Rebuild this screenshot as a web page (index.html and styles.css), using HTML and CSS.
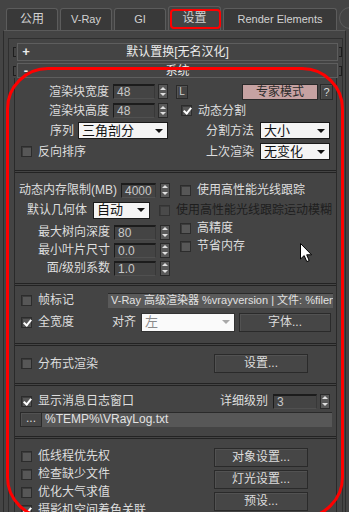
FILE: index.html
```html
<!DOCTYPE html>
<html lang="zh-CN">
<head>
    <meta charset="UTF-8">
    <meta name="viewport" content="width=device-width, initial-scale=1.0">
    <title>V-Ray 设置</title>
    <link rel="stylesheet" href="styles.css">
</head>
<body>
    <div class="tabs">
        <div class="tab">公用</div>
        <div class="tab en">V-Ray</div>
        <div class="tab en">GI</div>
        <div class="tab active">设置</div>
        <div class="tab en wide">Render Elements</div>
        <span class="tab-ring"></span>
    </div>

    <div class="panel">
        <div class="rollouts">
            <div class="roll-head">
                <span class="brk"></span>
                <div class="bar"><span class="sign">+</span><span>默认置换[无名汉化]</span><span></span></div>
                <span class="brk right"></span>
            </div>
            <div class="roll-head open">
                <span class="brk"></span>
                <div class="bar"><span class="sign">-</span><span>系统</span><span></span></div>
                <span class="brk right"></span>
            </div>

            <div class="roll-body">
                <!-- render regions -->
                <div class="sec sec-split">
                    <div class="cell-l">
                        <span>渲染块宽度</span>
                        <span class="inp w42">48</span>
                        <span class="spin"></span>
                    </div>
                    <div class="cell-r top">
                        <span class="lbtn">L</span>
                        <span class="btn expert">专家模式</span>
                        <span class="btn qbtn">?</span>
                    </div>
                    <div class="cell-l">
                        <span>渲染块高度</span>
                        <span class="inp w42">48</span>
                        <span class="spin"></span>
                    </div>
                    <div class="cell-r">
                        <label class="chk in11"><span class="cb on"></span>动态分割</label>
                    </div>
                    <div class="cell-l">
                        <span>序列</span>
                        <span class="dd w90">三角剖分</span>
                    </div>
                    <div class="cell-r end">
                        <span>分割方法</span>
                        <span class="dd w70">大小</span>
                    </div>
                    <div class="cell-l start">
                        <label class="chk"><span class="cb"></span>反向排序</label>
                    </div>
                    <div class="cell-r end">
                        <span>上次渲染</span>
                        <span class="dd w70">无变化</span>
                    </div>
                </div>

                <!-- raycaster -->
                <div class="sec sec-ray">
                    <div class="col-l">
                        <div class="row">
                            <span>动态内存限制(MB)</span>
                            <span class="inp w35">4000</span>
                            <span class="spin"></span>
                        </div>
                        <div class="row tall">
                            <span>默认几何体</span>
                            <span class="dd w57">自动</span>
                            <span class="cb dim"></span>
                        </div>
                        <div class="row">
                            <span>最大树向深度</span>
                            <span class="inp w42">80</span>
                            <span class="spin"></span>
                        </div>
                        <div class="row">
                            <span>最小叶片尺寸</span>
                            <span class="inp w42">0.0</span>
                            <span class="spin"></span>
                        </div>
                        <div class="row">
                            <span>面/级别系数</span>
                            <span class="inp w42">1.0</span>
                            <span class="spin"></span>
                        </div>
                    </div>
                    <div class="col-r">
                        <label class="chk in4"><span class="cb"></span>使用高性能光线跟踪</label>
                        <div class="off-text">使用高性能光线跟踪运动模糊</div>
                        <label class="chk in4"><span class="cb"></span>高精度</label>
                        <label class="chk in4"><span class="cb"></span>节省内存</label>
                    </div>
                </div>

                <!-- frame stamp -->
                <div class="sec sec-stamp">
                    <label class="chk"><span class="cb"></span>帧标记</label>
                    <div class="fld stamp">V-Ray 高级渲染器 %vrayversion | 文件: %filename | 帧: %frame</div>
                    <label class="chk"><span class="cb on"></span>全宽度</label>
                    <div class="stamp-opts">
                        <span>对齐</span>
                        <span class="dd off w94">左</span>
                        <span class="btn w92">字体...</span>
                    </div>
                </div>

                <!-- distributed -->
                <div class="sec sec-dr">
                    <label class="chk"><span class="cb"></span>分布式渲染</label>
                    <span class="btn">设置...</span>
                </div>

                <!-- log window -->
                <div class="sec sec-log">
                    <div class="log-top">
                        <label class="chk"><span class="cb on"></span>显示消息日志窗口</label>
                        <span class="push">详细级别</span>
                        <span class="inp w44">3</span>
                        <span class="spin"></span>
                    </div>
                    <div class="log-path">
                        <span class="btn dots">...</span>
                        <div class="fld path">%TEMP%\VRayLog.txt</div>
                    </div>
                </div>

                <!-- misc -->
                <div class="sec sec-misc">
                    <div class="col-l">
                        <label class="chk"><span class="cb"></span>低线程优先权</label>
                        <label class="chk"><span class="cb"></span>检查缺少文件</label>
                        <label class="chk"><span class="cb"></span>优化大气求值</label>
                        <label class="chk"><span class="cb on"></span>摄影机空间着色关联</label>
                    </div>
                    <div class="col-r">
                        <span class="btn">对象设置...</span>
                        <span class="btn">灯光设置...</span>
                        <span class="btn">预设...</span>
                    </div>
                </div>
            </div>
        </div>
    </div>

    <!-- red annotation marks drawn over the dialog -->
    <div class="mark-tab"></div>
    <div class="mark-area"></div>

    <svg class="cursor" width="13" height="20" viewBox="0 0 13 20">
        <path d="M0.5 0.5 L0.5 16 L4.2 12.6 L6.8 18.6 L9.2 17.6 L6.7 11.8 L11.6 11.8 Z" fill="#fff" stroke="#000" stroke-width="1"/>
    </svg>
</body>
</html>
```

FILE: styles.css
```css
* {
    box-sizing: border-box;
}
body {
    margin: 0;
    width: 349px;
    height: 512px;
    overflow: hidden;
    position: relative;
    background: #444;
    color: #dedede;
    font-family: "Liberation Sans", "Noto Sans CJK SC", sans-serif;
    font-size: 12px;
    line-height: 14px;
}
label {
    cursor: default;
}

/* tabs */
.tabs {
    display: flex;
    align-items: flex-end;
    gap: 2px;
    height: 30px;
    padding-left: 6px;
}
.tab {
    flex-shrink: 0;
    width: 52px;
    height: 22px;
    border: 1px solid #5c5c5c;
    border-bottom: none;
    border-radius: 3px 3px 0 0;
    background: #393939;
    color: #d2d2d2;
    text-align: center;
    line-height: 20px;
}
.tab.en {
    font-size: 11px;
}
.tab.wide {
    width: 114px;
}
.tab.active {
    width: 53px;
    height: 24px;
    background: #444;
    line-height: 22px;
}
.tab-ring {
    flex-shrink: 0;
    align-self: center;
    width: 22px;
    height: 22px;
    margin-top: 6px;
    border: 1px solid #5c5c5c;
    border-radius: 50%;
}

/* panel and rollouts */
.panel {
    height: 482px;
    margin: 0 3px;
    padding: 7px 2px 0 4px;
    border-top: 1px solid #5a5a5a;
    border-left: 1px solid #2c2c2c;
    border-right: 1px solid #2c2c2c;
}
.rollouts {
    height: 100%;
    padding-top: 4px;
    border: 1px solid #2f2f2f;
    border-bottom: none;
}
.roll-head {
    display: flex;
    align-items: center;
    gap: 1px;
    height: 18px;
    margin-bottom: 2px;
    padding-left: 4px;
}
.roll-head.open {
    height: 15px;
    margin-bottom: 0;
}
.brk {
    width: 3px;
    height: 10px;
    border: 1px solid #1e1e1e;
    border-right: none;
}
.brk.right {
    border-left: none;
    border-right: 1px solid #1e1e1e;
}
.bar {
    flex: 1;
    height: 100%;
    display: grid;
    grid-template-columns: 16px 1fr 16px;
    align-items: center;
    border: 1px solid #5e5e5e;
    color: #ececec;
    text-align: center;
}
.sign {
    font-weight: bold;
    font-size: 13px;
}
.roll-body {
    margin: 0 5px;
    border-left: 1px solid #2a2a2a;
    border-right: 1px solid #2a2a2a;
}
.sec {
    border-bottom: 3px double #232323;
}

/* controls */
.chk {
    display: flex;
    align-items: center;
    gap: 6px;
    padding-left: 6px;
    height: 18px;
    white-space: nowrap;
}
.chk.in11 {
    padding-left: 11px;
}
.chk.in4 {
    padding-left: 4px;
}
.cb {
    flex-shrink: 0;
    position: relative;
    width: 11px;
    height: 11px;
    border: 1px solid #2c2c2c;
    background: #575757;
    box-shadow: inset 1px 1px 0 #3c3c3c;
}
.cb.on::after {
    content: "";
    position: absolute;
    left: 3px;
    top: 0;
    width: 3px;
    height: 6px;
    border: solid #fff;
    border-width: 0 2px 2px 0;
    transform: rotate(40deg);
}
.cb.dim {
    background: #4a4a4a;
    border-color: #333;
}
.inp {
    flex-shrink: 0;
    height: 15px;
    padding-left: 3px;
    background: #444;
    border-top: 2px solid #1c1c1c;
    border-left: 1px solid #1c1c1c;
    border-right: 1px solid #383838;
    border-bottom: 1px solid #505050;
    color: #c8c8c8;
    line-height: 12px;
}
.w35 { width: 35px; }
.w42 { width: 42px; }
.w44 { width: 44px; }
.spin {
    flex-shrink: 0;
    display: flex;
    flex-direction: column;
    justify-content: space-around;
    align-items: center;
    width: 10px;
    height: 15px;
    border: 1px solid #2a2a2a;
    background: #595959;
}
.spin::before,
.spin::after {
    content: "";
    border-left: 3px solid transparent;
    border-right: 3px solid transparent;
}
.spin::before {
    border-bottom: 3px solid #e0e0e0;
}
.spin::after {
    border-top: 3px solid #e0e0e0;
}
.dd {
    flex-shrink: 0;
    display: flex;
    align-items: center;
    justify-content: space-between;
    height: 17px;
    padding: 0 4px 0 3px;
    background: #f4f4f4;
    border: 1px solid #1a1a1a;
    color: #111;
    font-size: 13px;
}
.dd::after {
    content: "";
    border-left: 4px solid transparent;
    border-right: 4px solid transparent;
    border-top: 4px solid #111;
}
.dd.off {
    height: 19px;
    background: #fafafa;
    color: #8a8a8a;
    border-color: #333;
}
.dd.off::after {
    border-top-color: #a8a8a8;
}
.w57 { width: 57px; }
.w70 { width: 70px; }
.w90 { width: 90px; }
.w94 { width: 94px; }
.btn {
    flex-shrink: 0;
    display: block;
    height: 19px;
    border: 1px solid #2a2a2a;
    background: #464646;
    box-shadow: inset 1px 1px 0 #525252;
    color: #dcdcdc;
    text-align: center;
    line-height: 17px;
    white-space: nowrap;
}
.w92 { width: 92px; }
.lbtn {
    width: 12px;
    height: 14px;
    border: 1px solid #2a2a2a;
    box-shadow: inset 1px 1px 0 #555;
    color: #cfcfcf;
    font-size: 10px;
    line-height: 12px;
    text-align: center;
}
.btn.expert {
    width: 76px;
    height: 16px;
    margin-left: auto;
    background: #c6a2a2;
    box-shadow: none;
    color: #2a2a2a;
    line-height: 14px;
}
.btn.qbtn {
    width: 13px;
    height: 16px;
    line-height: 14px;
    font-size: 11px;
}
.fld {
    height: 15px;
    padding-left: 3px;
    background: #5a5a5a;
    border-top: 1px solid #2a2a2a;
    color: #e2e2e2;
    white-space: nowrap;
    overflow: hidden;
    line-height: 13px;
}

/* section: render regions */
.sec-split {
    height: 95px;
    padding-top: 5px;
    display: grid;
    grid-template-columns: 155px 1fr;
    grid-template-rows: 17px 17px 19px 19px;
    row-gap: 2px;
}
.cell-l {
    display: flex;
    align-items: center;
    justify-content: flex-end;
    gap: 4px;
    padding-right: 2px;
}
.cell-l .spin {
    margin-left: -1px;
}
.cell-l.start {
    justify-content: flex-start;
}
.cell-r {
    display: flex;
    align-items: center;
}
.cell-r.top {
    gap: 2px;
    padding: 0 3px 0 6px;
}
.cell-r.end {
    justify-content: flex-end;
    gap: 6px;
    padding-right: 6px;
}

/* section: raycaster */
.sec-ray {
    height: 113px;
    padding-top: 8px;
    display: flex;
}
.sec-ray .col-l {
    width: 161px;
    padding-right: 6px;
}
.sec-ray .row {
    display: flex;
    align-items: center;
    justify-content: flex-end;
    gap: 4px;
    height: 18px;
}
.sec-ray .row.tall {
    height: 20px;
    margin: 1px 0 3px;
    gap: 6px;
}
.sec-ray .row.tall .cb {
    margin-left: 3px;
}
.col-r .off-text {
    height: 18px;
    margin-top: 2px;
    color: #1e1e1e;
    line-height: 18px;
    white-space: nowrap;
}

/* section: frame stamp */
.sec-stamp {
    height: 60px;
    padding-top: 6px;
    display: grid;
    grid-template-columns: 93px 1fr;
    grid-template-rows: 16px 20px;
    row-gap: 4px;
    align-items: center;
}
.fld.stamp {
    margin-right: 3px;
    font-size: 11px;
}
.stamp-opts {
    display: flex;
    align-items: center;
    gap: 5px;
    padding-left: 4px;
}
.stamp-opts .btn {
    margin-left: -1px;
}

/* section: distributed */
.sec-dr {
    height: 40px;
    padding-top: 8px;
    display: grid;
    grid-template-columns: 199px 94px;
    align-items: start;
}
.sec-dr .chk {
    height: 19px;
}

/* section: log window */
.sec-log {
    height: 53px;
    padding-top: 7px;
}
.log-top {
    display: flex;
    align-items: center;
    gap: 3px;
    height: 16px;
    padding-right: 6px;
}
.log-top .push {
    margin-left: auto;
    margin-right: 2px;
}
.log-path {
    display: flex;
    height: 15px;
    margin-top: 3px;
    padding: 0 4px 0 5px;
}
.btn.dots {
    width: 22px;
    height: 15px;
    line-height: 11px;
}
.fld.path {
    flex: 1;
    background: #575757;
}

/* section: misc */
.sec-misc {
    display: flex;
    padding-top: 8px;
    border-bottom: none;
}
.sec-misc .col-l {
    width: 199px;
}
.sec-misc .col-r {
    width: 94px;
    display: flex;
    flex-direction: column;
    gap: 3px;
    padding-top: 1px;
}

/* overlays */
.mark-tab {
    position: absolute;
    left: 170px;
    top: 9px;
    width: 51px;
    height: 20px;
    border: 2px solid #f00;
    border-radius: 4px;
}
.mark-area {
    position: absolute;
    left: 6px;
    top: 67px;
    width: 338px;
    height: 452px;
    border: 3px solid #f00;
    border-radius: 42px;
}
.cursor {
    position: absolute;
    left: 300px;
    top: 243px;
}
```
